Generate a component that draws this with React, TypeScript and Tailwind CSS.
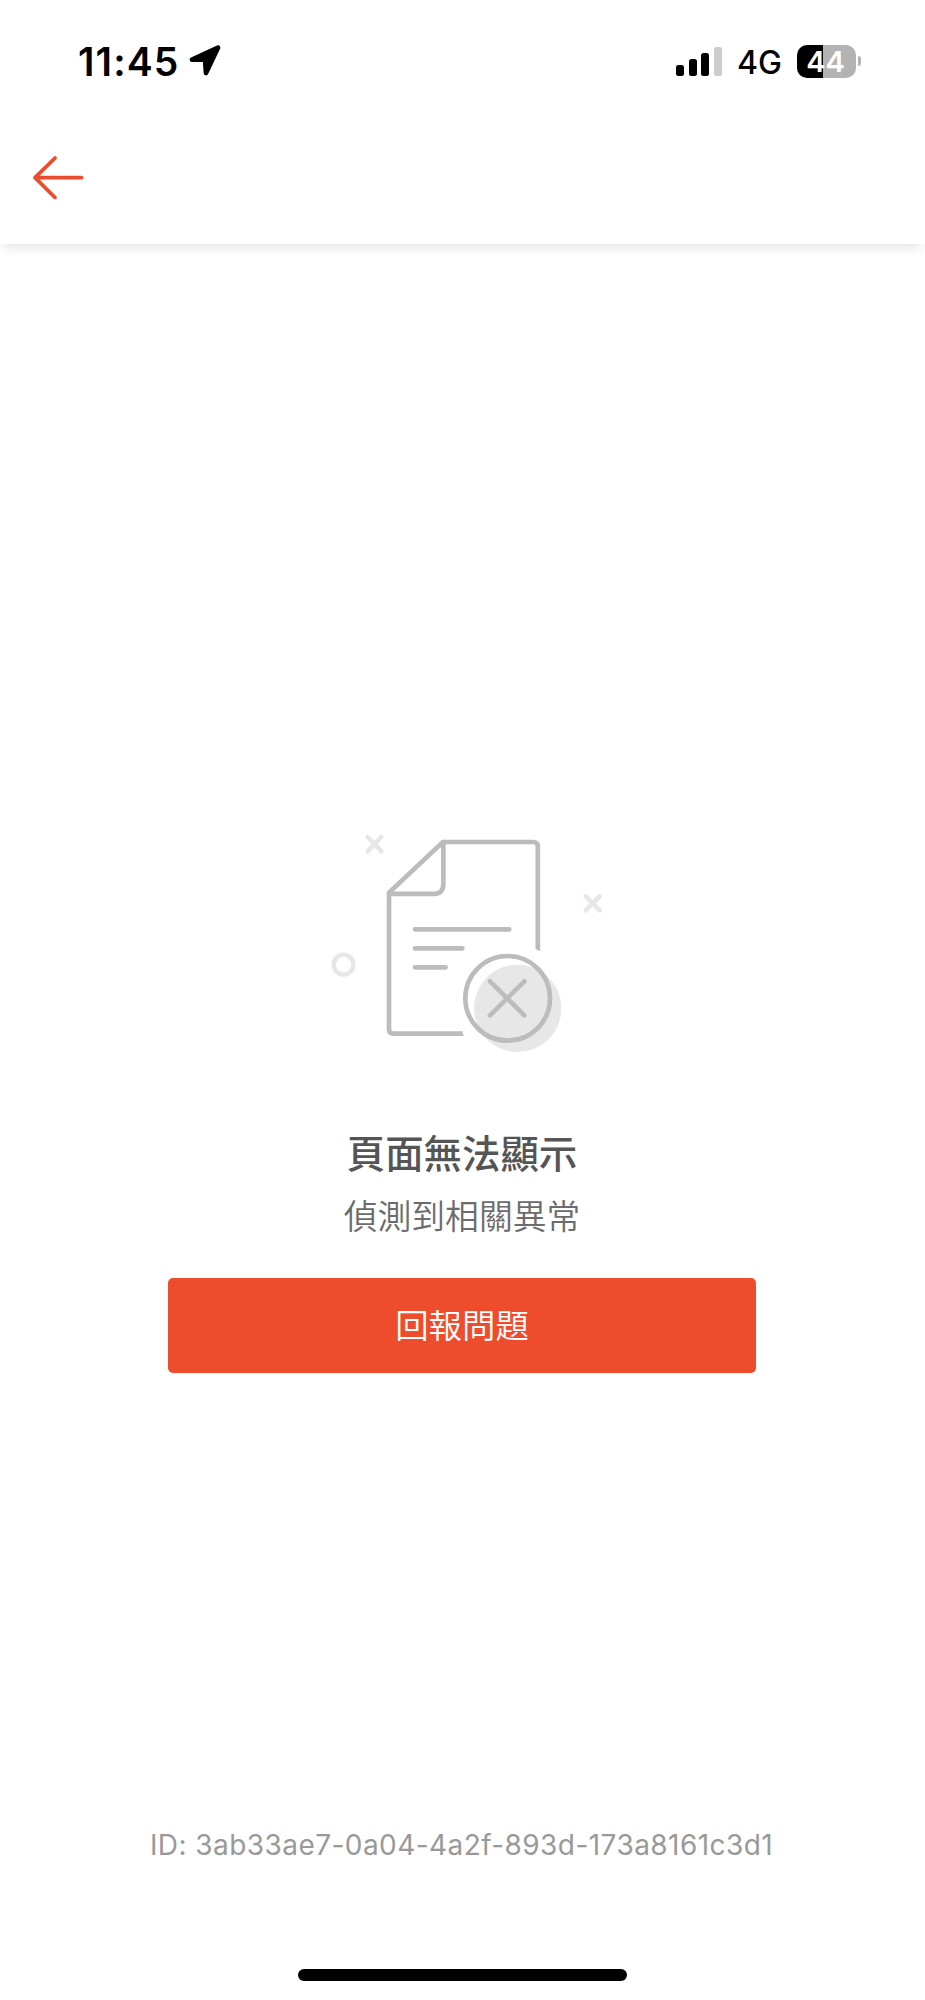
const latin = "font-['Inter','Liberation_Sans',sans-serif]";
const cjk = "font-['Noto_Sans_CJK_TC','Noto_Sans_CJK_SC',sans-serif]";

function LocationArrow() {
  return (
    <svg className="mb-[2px] ml-[10px] h-8 w-8" viewBox="0 0 96 96" fill="#000" stroke="#000" strokeWidth="14" strokeLinejoin="round">
      <path d="M9 47 L87 11 L51 87 L48 47 Z" />
    </svg>
  );
}

function Signal() {
  return (
    <div className="flex h-[30px] items-end gap-[4.6px]">
      <span className="h-[11px] w-2 rounded-[2.5px] bg-black" />
      <span className="h-[17px] w-2 rounded-[2.5px] bg-black" />
      <span className="h-[23px] w-2 rounded-[2.5px] bg-black" />
      <span className="h-[29px] w-2 rounded-[2.5px] bg-[#cccccc]" />
    </div>
  );
}

function Battery() {
  return (
    <div className="flex items-center gap-[2px]">
      <div className="flex h-[33px] w-[59px] items-center justify-center rounded-[10px] bg-[linear-gradient(to_right,#000_26px,#b3b3b3_26px)] pr-[2px] text-[29px] leading-none font-semibold text-white">
        44
      </div>
      <span className="h-[10px] w-[3px] rounded-r-full bg-[#b3b3b3]" />
    </div>
  );
}

function StatusBar() {
  return (
    <div className={`flex h-[122px] items-center justify-between pr-[64px] pl-[78px] ${latin}`}>
      <div className="flex items-center text-black">
        <span className="text-[39px] leading-none font-semibold tracking-[1.1px]">11:45</span>
        <LocationArrow />
      </div>
      <div className="flex items-center text-black">
        <Signal />
        <span className="mt-[3px] ml-[15px] text-[32px] leading-none font-medium">4G</span>
        <div className="ml-[15px]">
          <Battery />
        </div>
      </div>
    </div>
  );
}

function BackArrow() {
  return (
    <svg className="h-12 w-[54px]" viewBox="0 0 54 48" fill="none" stroke="#ec4c2d" strokeWidth="3.8" strokeLinecap="round" strokeLinejoin="round">
      <path d="M23 4 L3 23.7 L23 43.5 M3 23.7 H49.5" />
    </svg>
  );
}

function Illustration() {
  return (
    <svg className="h-[240px] w-[315px]" viewBox="-45 0 945 720" fill="none" strokeLinecap="round">
      <g stroke="#e7e7e7" strokeWidth="13.5">
        <path d="M143 51 L184 94 M184 51 L143 94" />
        <path d="M797 229 L839 271 M839 229 L797 271" />
        <circle cx="71" cy="434" r="29.5" />
      </g>
      <circle cx="593" cy="565" r="131" fill="#e7e7e7" />
      <g stroke="#bcbcbc" strokeWidth="14">
        <path strokeLinecap="butt" strokeLinejoin="round" d="M428 641 H220 Q207 641 207 628 V218 L369 66 H640 Q653.500 66 653.500 79 V388" />
        <path d="M370 66 V193 Q370 221.500 342 221.500 H209" />
        <path d="M285 328 H568 M285 385 H427 M285 442 H377" />
        <circle cx="563" cy="535" r="127" />
        <path d="M510 484 L613 586 M613 484 L510 586" />
      </g>
      <path d="M646.500 387 L660.500 394 V387 Z M421 634 L432 648 H421 Z" fill="#bcbcbc" />
    </svg>
  );
}

export default function App() {
  return (
    <div className="flex h-[2000px] w-[925px] flex-col overflow-hidden bg-white">
      <header className="h-[244px] shrink-0 bg-white shadow-[0_8px_10px_-4px_rgba(0,0,0,0.11)]">
        <StatusBar />
        <button type="button" aria-label="Back" className="mt-8 ml-8 block">
          <BackArrow />
        </button>
      </header>
      <main className={`flex flex-1 flex-col items-center pt-[576px] pr-[1px] ${cjk}`}>
        <Illustration />
        <h1 className="mt-[63px] text-[38.4px] leading-14 font-medium text-[#555]">頁面無法顯示</h1>
        <p className="mt-[12px] text-[33.8px] leading-12 font-[350] text-[#6c6c6c]">偵測到相關異常</p>
        <button type="button" className="mt-[38.5px] h-[95px] w-[588px] rounded-[5px] bg-[#ee4d2d] pb-[3px] text-[33.4px] leading-12 font-[350] text-white">
          回報問題
        </button>
      </main>
      <footer className={`flex h-[180px] shrink-0 flex-col items-center ${latin}`}>
        <p className="mt-[7px] pr-[2px] text-[28px] leading-9 tracking-[0.44px] whitespace-nowrap text-[#999]">ID: 3ab33ae7-0a04-4a2f-893d-173a8161c3d1</p>
        <div className="mt-auto mb-[19px] h-3 w-[329px] rounded-full bg-black" />
      </footer>
    </div>
  );
}
